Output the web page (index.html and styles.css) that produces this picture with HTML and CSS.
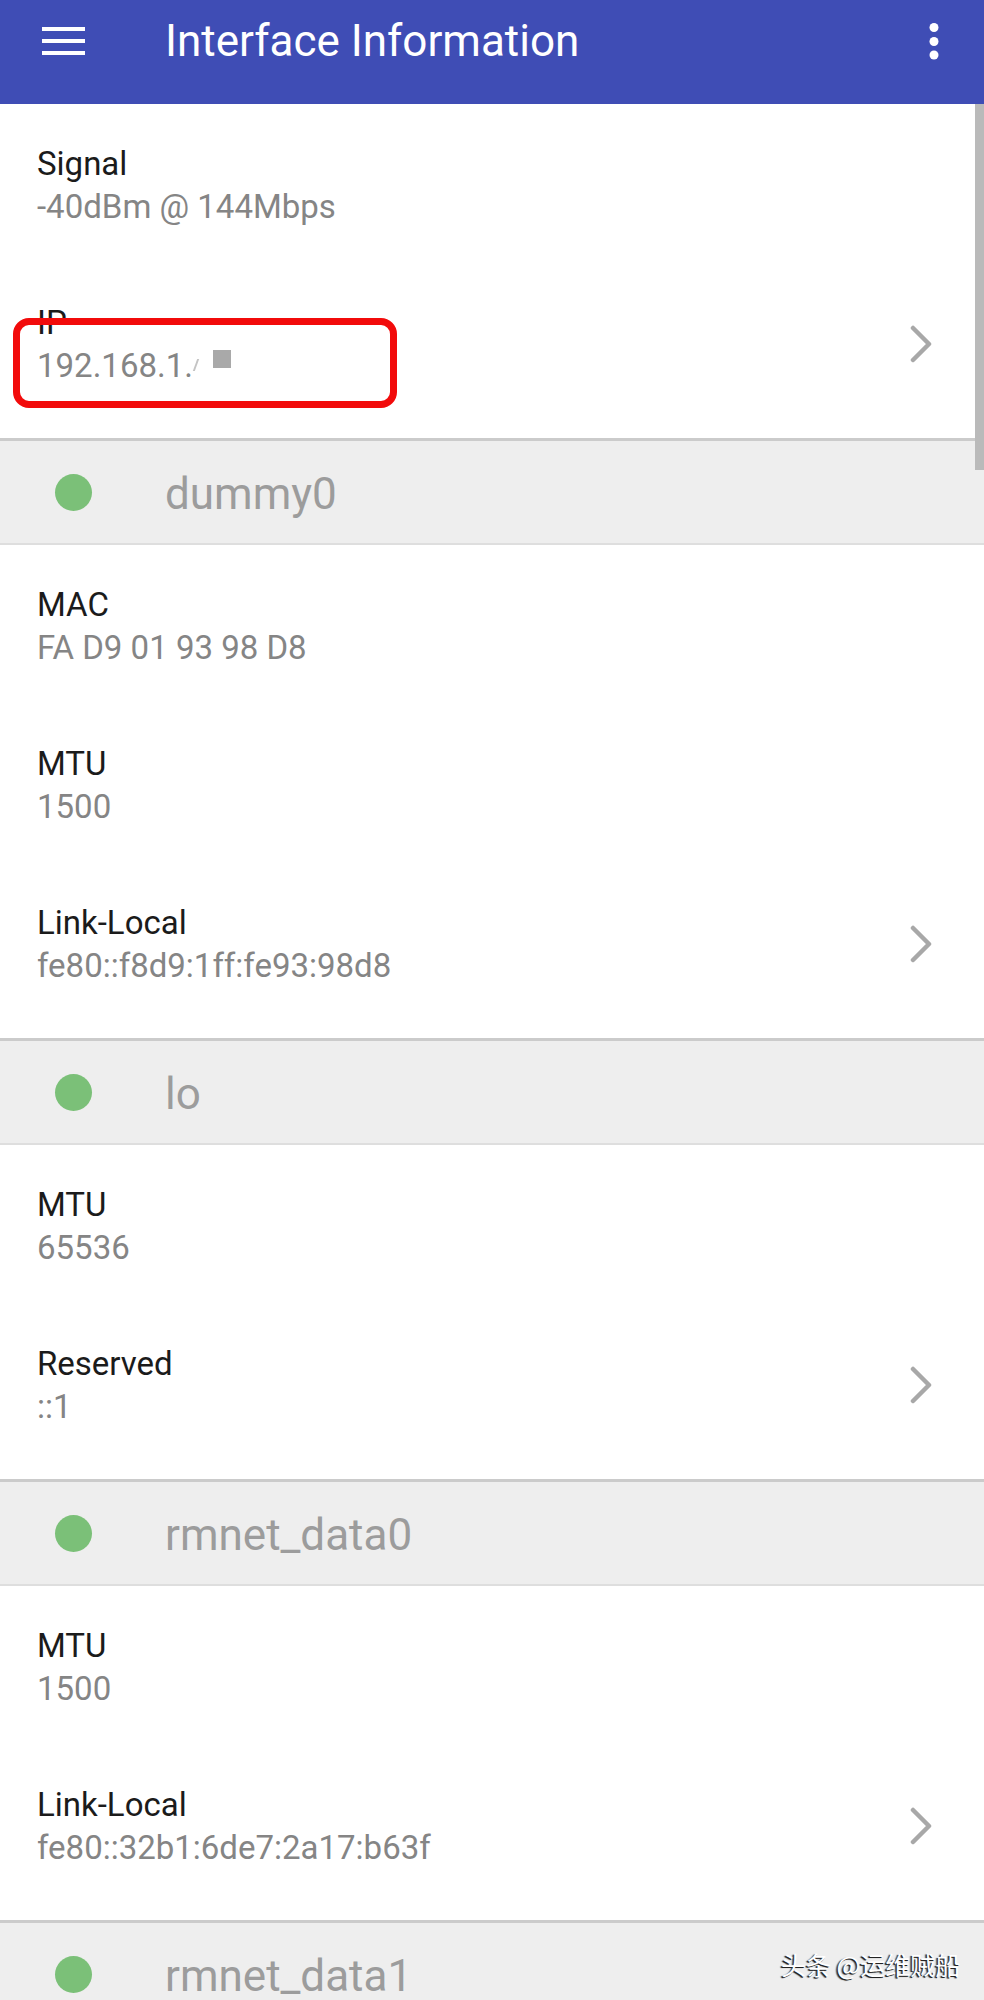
FILE: index.html
```html
<!DOCTYPE html>
<html lang="en">
<head>
<meta charset="utf-8">
<title>Interface Information</title>
<link rel="stylesheet" href="styles.css">
</head>
<body>
<div class="screen">
  <header class="appbar">
    <div class="appbar-row">
      <svg class="menu-icon" width="44" height="28" viewBox="0 0 44 28"><rect x="0" y="0" width="43" height="4" fill="#fff"/><rect x="0" y="12" width="43" height="4" fill="#fff"/><rect x="0" y="24" width="43" height="4" fill="#fff"/></svg>
      <h1 class="title">Interface Information</h1>
      <svg class="more-icon" width="10" height="37" viewBox="0 0 10 37"><circle cx="5" cy="4.5" r="4.5" fill="#fff"/><circle cx="5" cy="18.5" r="4.5" fill="#fff"/><circle cx="5" cy="32" r="4.5" fill="#fff"/></svg>
    </div>
  </header>

  <main class="list">
    <section class="group">
      <div class="row">
        <div class="texts"><div class="label">Signal</div><div class="value">-40dBm @ 144Mbps</div></div>
      </div>
      <div class="row row-ip">
        <div class="texts"><div class="label">IP</div><div class="value">192.168.1.<span class="sliver"></span><span class="redact"></span></div></div>
        <svg class="chev" width="22" height="38" viewBox="0 0 22 38"><polyline points="3,3 19,19 3,35" fill="none" stroke="#a8a8a8" stroke-width="4.5" stroke-linecap="round" stroke-linejoin="round"/></svg>
        <div class="highlight"></div>
      </div>
    </section>

    <div class="iface"><span class="dot"></span><span class="iface-name">dummy0</span></div>
    <section class="group">
      <div class="row"><div class="texts"><div class="label">MAC</div><div class="value">FA D9 01 93 98 D8</div></div></div>
      <div class="row"><div class="texts"><div class="label">MTU</div><div class="value">1500</div></div></div>
      <div class="row">
        <div class="texts"><div class="label">Link-Local</div><div class="value">fe80::f8d9:1ff:fe93:98d8</div></div>
        <svg class="chev" width="22" height="38" viewBox="0 0 22 38"><polyline points="3,3 19,19 3,35" fill="none" stroke="#a8a8a8" stroke-width="4.5" stroke-linecap="round" stroke-linejoin="round"/></svg>
      </div>
    </section>

    <div class="iface"><span class="dot"></span><span class="iface-name">lo</span></div>
    <section class="group">
      <div class="row"><div class="texts"><div class="label">MTU</div><div class="value">65536</div></div></div>
      <div class="row">
        <div class="texts"><div class="label">Reserved</div><div class="value">::1</div></div>
        <svg class="chev" width="22" height="38" viewBox="0 0 22 38"><polyline points="3,3 19,19 3,35" fill="none" stroke="#a8a8a8" stroke-width="4.5" stroke-linecap="round" stroke-linejoin="round"/></svg>
      </div>
    </section>

    <div class="iface"><span class="dot"></span><span class="iface-name">rmnet_data0</span></div>
    <section class="group">
      <div class="row"><div class="texts"><div class="label">MTU</div><div class="value">1500</div></div></div>
      <div class="row">
        <div class="texts"><div class="label">Link-Local</div><div class="value">fe80::32b1:6de7:2a17:b63f</div></div>
        <svg class="chev" width="22" height="38" viewBox="0 0 22 38"><polyline points="3,3 19,19 3,35" fill="none" stroke="#a8a8a8" stroke-width="4.5" stroke-linecap="round" stroke-linejoin="round"/></svg>
      </div>
    </section>

    <div class="iface"><span class="dot"></span><span class="iface-name">rmnet_data1</span></div>

    <div class="scrollbar"></div>
  </main>
  <div class="watermark">头条 @运维贼船</div>
</div>
</body>
</html>
```

FILE: styles.css
```css
html, body {
  margin: 0;
  padding: 0;
  background: #ffffff;
}

.screen {
  position: relative;
  width: 984px;
  height: 2000px;
  overflow: hidden;
  font-family: Roboto, "Noto Sans", "Liberation Sans", sans-serif;
}

.appbar {
  height: 104px;
  background: #3f4db5;
  box-sizing: border-box;
  padding-bottom: 22px;
}

.appbar-row {
  height: 82px;
  display: flex;
  align-items: center;
}

.menu-icon {
  margin-left: 42px;
  flex: none;
}

.title {
  margin: 0 0 0 79px;
  flex: 1;
  color: #ffffff;
  font-size: 44px;
  line-height: 44px;
  font-weight: 400;
}

.more-icon {
  margin-right: 45px;
  flex: none;
}

.list {
  position: relative;
}

.group {
  padding-bottom: 16px;
}

.row {
  position: relative;
  height: 159px;
  box-sizing: border-box;
  padding: 38px 52px 35px 37px;
  display: flex;
  align-items: flex-start;
  justify-content: space-between;
}

.label {
  font-size: 33px;
  line-height: 43px;
  color: #1b1b1b;
}

.value {
  font-size: 33px;
  line-height: 43px;
  color: #858585;
  white-space: nowrap;
}

.chev {
  align-self: center;
  margin-top: -1px;
  flex: none;
}

.sliver {
  display: inline-block;
  width: 2px;
  height: 12px;
  margin-left: 2px;
  background: #c4c4c4;
  transform: skewX(-20deg);
  vertical-align: 6px;
}

.redact {
  display: inline-block;
  width: 18px;
  height: 18px;
  margin-left: 16px;
  background: #a9a9a9;
  vertical-align: 9px;
}

.highlight {
  position: absolute;
  left: 13px;
  top: 55px;
  width: 384px;
  height: 90px;
  box-sizing: border-box;
  border: 7px solid #f20b0b;
  border-radius: 16px;
}

.iface {
  height: 107px;
  box-sizing: border-box;
  background: #eeeeee;
  border-top: 3px solid #cbcbcb;
  border-bottom: 2px solid #dedede;
  display: flex;
  align-items: center;
}

.dot {
  width: 37px;
  height: 37px;
  border-radius: 50%;
  background: #7bc078;
  margin-left: 55px;
  flex: none;
}

.iface-name {
  margin-left: 73px;
  padding-top: 3px;
  font-size: 44px;
  line-height: 44px;
  color: #9c9c9c;
}

.scrollbar {
  position: absolute;
  top: 0;
  right: 0;
  width: 9px;
  height: 366px;
  background: #bababa;
}

.watermark {
  position: absolute;
  left: 781px;
  top: 1949px;
  font-family: "Noto Sans CJK SC", "Noto Sans", sans-serif;
  font-size: 25px;
  line-height: 30px;
  color: #ffffff;
  text-shadow: -1px 1px 0 #222, -2px 1px 1px rgba(0,0,0,0.6);
  white-space: nowrap;
}
```
